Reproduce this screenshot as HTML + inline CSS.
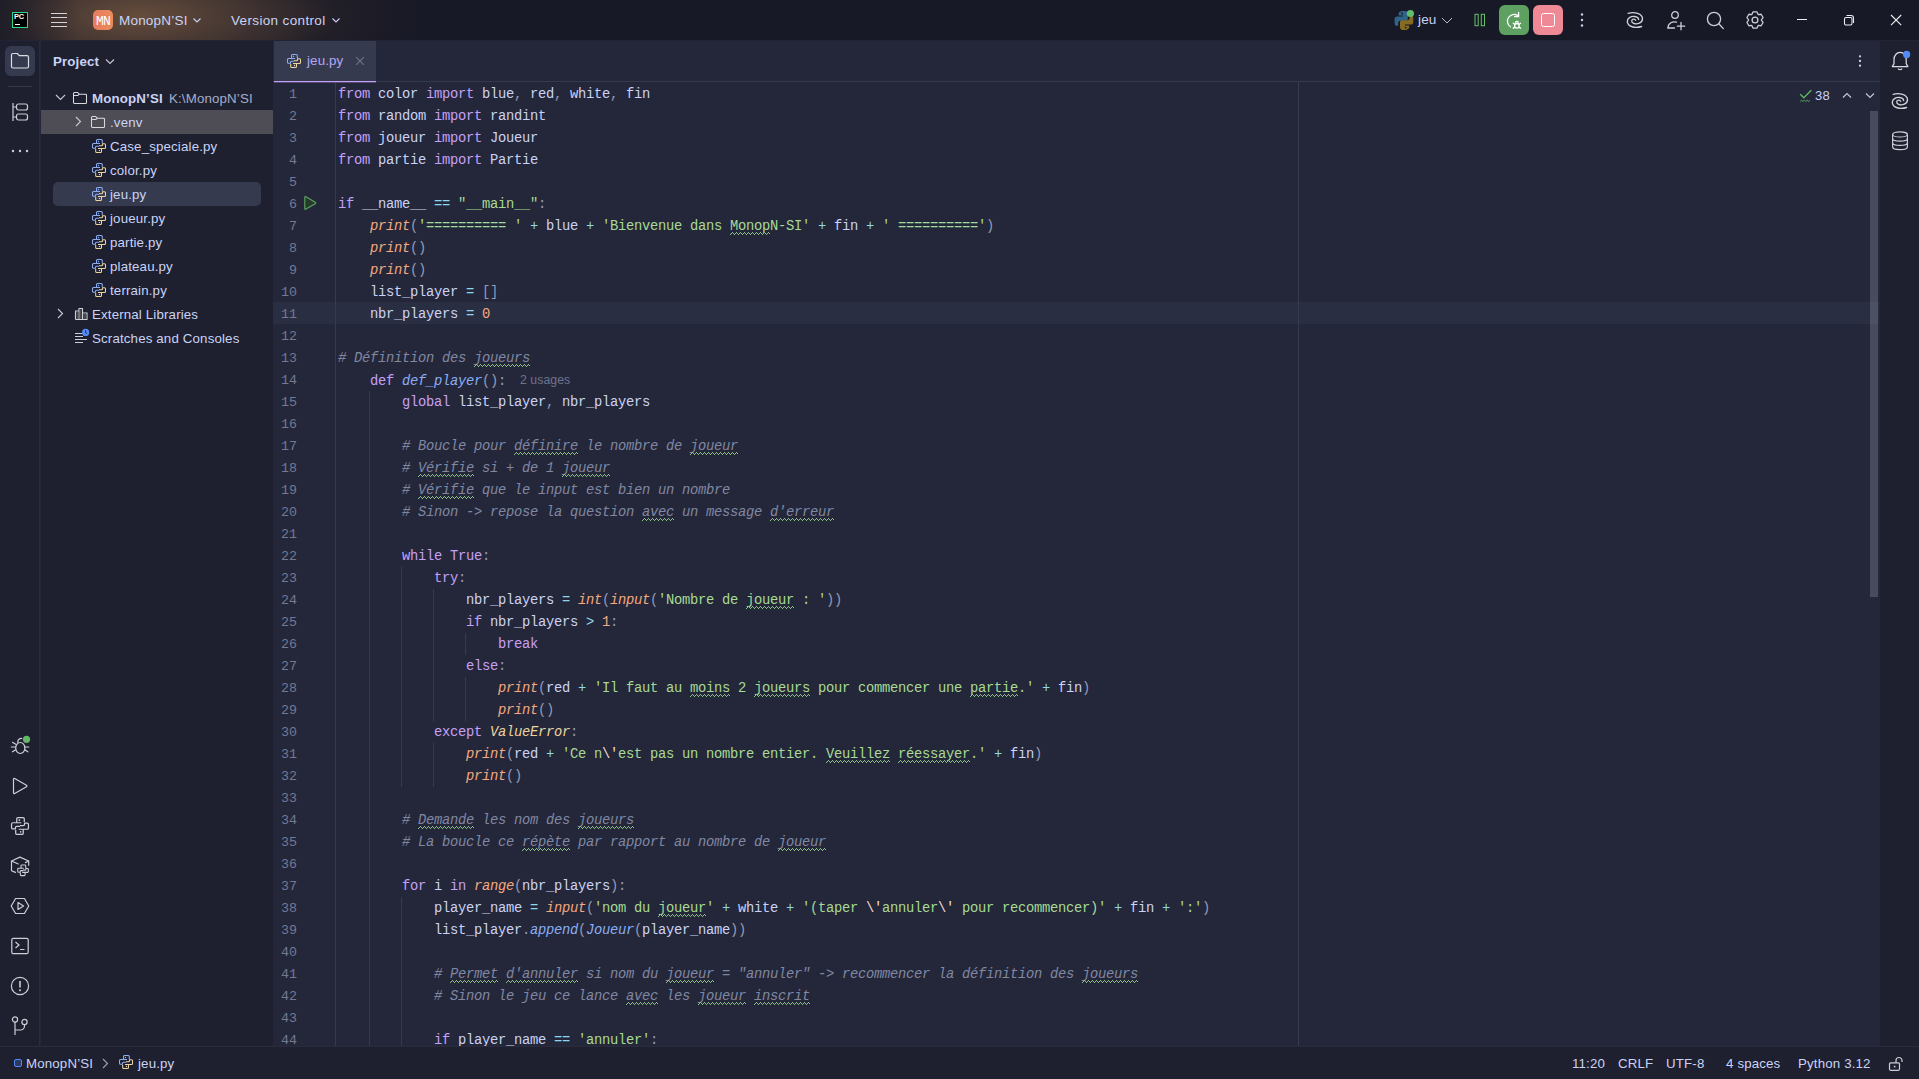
<!DOCTYPE html>
<html><head><meta charset="utf-8">
<style>
*{box-sizing:border-box}
html,body{margin:0;padding:0}
body{width:1919px;height:1079px;overflow:hidden;position:relative;background:#24273a;font-family:"Liberation Sans",sans-serif;font-size:13px;color:#cad3f5}
.abs{position:absolute}
#title{left:0;top:0;width:1919px;height:40px;background:#181926;overflow:hidden}
#glow{left:0;top:0;width:600px;height:40px;background:linear-gradient(90deg, rgba(24,25,38,.75) 0px, rgba(24,25,38,0) 80px), radial-gradient(ellipse 280px 90px at 140px 16px, rgba(110,82,62,.9) 0%, rgba(96,72,57,.62) 35%, rgba(60,46,44,.25) 70%, rgba(24,25,38,0) 100%)}
#tbline{left:0;top:40px;width:1919px;height:1px;background:#222436}
#lstrip{left:0;top:41px;width:40px;height:1005px;background:#1e2030;border-right:1px solid #2a2c3e}
#proj{left:41px;top:41px;width:232px;height:1005px;background:#1e2030}
#editor{left:273px;top:41px;width:1607px;height:1005px;background:#24273a;overflow:hidden}
#rstrip{left:1880px;top:41px;width:39px;height:1005px;background:#1e2030}
#status{left:0;top:1046px;width:1919px;height:33px;background:#1e2030;border-top:1px solid #2a2c3e}
.t{position:absolute;white-space:pre;line-height:16px;letter-spacing:0.15px;font-size:13.3px}
/* code */
#code{position:absolute;left:65px;top:41px;width:1540px;height:1000px}
.ln{position:absolute;left:0;height:22px;line-height:22px;white-space:pre;font-family:"Liberation Mono",monospace;font-size:13.8px;letter-spacing:-0.28px;color:#cad3f5;padding-top:2px}
.kw{color:#c6a0f6}.bi{color:#f5a97f;font-style:italic}.st{color:#a6da95}.es{color:#f4dbd6}.nu{color:#f5a97f}
.cm{color:#8087a2;font-style:italic}.op{color:#91d7e3}.pu{color:#939ab7}.fn{color:#8aadf4;font-style:italic}
.cls{color:#eed49f;font-style:italic}
.id{color:#cad3f5}
.ty{}
.hint{font-family:"Liberation Sans",sans-serif;font-size:12.3px;letter-spacing:0.05px;color:#6e738d;margin-left:14px;font-style:normal;position:relative;top:-1px}
#gutter{position:absolute;left:0;top:41px;width:62px;height:1000px}
.gn{position:absolute;left:0;width:24px;text-align:right;height:22px;line-height:22px;font-family:"Liberation Mono",monospace;font-size:13.333px;color:#737994;padding-top:2px}
#curline{position:absolute;left:0;top:261px;width:1606px;height:22px;background:#2a2e43}
#gsep{position:absolute;left:62px;top:41px;width:1px;height:1000px;background:#363a4f}
#margin{position:absolute;left:1025px;top:41px;width:1px;height:1000px;background:#363a4f}
.ig{position:absolute;width:1px;background:#363a4f}
#tabs{position:absolute;left:0;top:0;width:1607px;height:41px;border-bottom:1px solid #363a4f}
#tab{position:absolute;left:1px;top:0;width:102px;height:40px;background:#363a4f}
#scroll{position:absolute;left:1597px;top:70px;width:8px;height:487px;background:#494d64}
</style></head><body>
<div id="title" class="abs"><div id="glow" class="abs"></div>
  <div class="abs" style="left:12px;top:12px;width:16px;height:16px;background:#000;border:1px solid #2bd98c"></div>
  <div class="abs" style="left:14px;top:13px;font:bold 7.5px 'Liberation Sans',sans-serif;color:#fff;letter-spacing:-0.3px;line-height:8px">PC</div>
  <div class="abs" style="left:15px;top:24px;width:5px;height:1px;background:#fff"></div>
  <svg class="abs" style="left:51px;top:12px" width="16" height="16" viewBox="0 0 16 16"><g stroke="#d4d4dc" stroke-width="1.2" stroke-linecap="round"><line x1="0.5" y1="1.5" x2="15.5" y2="1.5"/><line x1="0.5" y1="5.5" x2="15.5" y2="5.5"/><line x1="0.5" y1="10.5" x2="15.5" y2="10.5"/><line x1="0.5" y1="14.5" x2="15.5" y2="14.5"/></g></svg>
  <div class="abs" style="left:93px;top:10px;width:20px;height:20px;border-radius:5px;background:linear-gradient(90deg,#e77b60,#ea8c5a)"></div>
  <div class="abs" style="left:94px;top:15px;width:18px;text-align:center;font:13px 'Liberation Mono',monospace;color:#fff;line-height:14px;letter-spacing:-0.8px">MN</div>
  <div class="t" style="left:119px;top:13px;font-size:13.5px;letter-spacing:0.2px;color:#cad3f5">MonopN’SI</div>
  <svg class="abs" style="left:192px;top:16px" width="10" height="8" viewBox="0 0 10 8"><path d="M1.5 2.5 L5 6 L8.5 2.5" fill="none" stroke="#cad3f5" stroke-width="1.1"/></svg>
  <div class="t" style="left:231px;top:13px;font-size:13.5px;letter-spacing:0.35px;color:#cad3f5">Version control</div>
  <svg class="abs" style="left:331px;top:16px" width="10" height="8" viewBox="0 0 10 8"><path d="M1.5 2.5 L5 6 L8.5 2.5" fill="none" stroke="#cad3f5" stroke-width="1.1"/></svg>
  <svg class="abs" style="left:1393px;top:8px" width="26" height="24" viewBox="0 0 26 24">
  <g transform="translate(1.2,1.5) scale(1.0)">
  <path d="M6.8 1.6 h4.4 a2.4 2.4 0 0 1 2.4 2.4 v5.6 a1.6 1.6 0 0 1 -1.6 1.6 h-5.6 a2.4 2.4 0 0 0 -2.4 2.4 v2.6 h-1.8 a1.8 1.8 0 0 1 -1.8 -1.8 v-4.8 a2.6 2.6 0 0 1 2.6 -2.6 h5.8 v-1 h-4.4 v-1.6 a2.4 2.4 0 0 1 2.4 -2.4 z" fill="#2f6488"/>
  <path d="M12.6 20.4 h-4.4 a2.4 2.4 0 0 1 -2.4 -2.4 v-5.6 a1.6 1.6 0 0 1 1.6 -1.6 h5.6 a2.4 2.4 0 0 0 2.4 -2.4 v-2.6 h1.8 a1.8 1.8 0 0 1 1.8 1.8 v4.8 a2.6 2.6 0 0 1 -2.6 2.6 h-5.8 v1 h4.4 v1.6 a2.4 2.4 0 0 1 -2.4 2.4 z" fill="#866b22"/>
  <circle cx="7.9" cy="3.9" r="0.85" fill="#181926"/><circle cx="11.5" cy="18.1" r="0.85" fill="#181926"/>
  </g>
  <circle cx="17.4" cy="5.5" r="3.6" fill="#62bd6a"/>
</svg>
<div class="t" style="left:1418px;top:12px;font-size:13.5px;color:#cad3f5">jeu</div>
<svg class="abs" style="left:1441px;top:16px" width="12" height="9" viewBox="0 0 12 9"><path d="M1 2 L6 7 L11 2" fill="none" stroke="#b9bac4" stroke-width="1"/></svg>
<svg class="abs" style="left:1474px;top:13px" width="12" height="14" viewBox="0 0 12 14"><g fill="none" stroke="#65c16a" stroke-width="1"><rect x="1" y="1.3" width="3.2" height="11.4"/><rect x="7.3" y="1.3" width="3.2" height="11.4"/></g></svg>
<div class="abs" style="left:1499px;top:5px;width:30px;height:30px;border-radius:6px;background:#5ea061"></div>
<svg class="abs" style="left:1499px;top:5px" width="30" height="30" viewBox="0 0 30 30"><g fill="none" stroke="#fff" stroke-width="1.3" stroke-linecap="round">
  <path d="M11.5 21.8 A6.3 6.3 0 0 1 18.8 10.5"/><path d="M19.6 7.5 v4 h-4"/>
  <circle cx="17.9" cy="20.8" r="2.3"/><path d="M14.2 18.3 l1.6 1 M21.6 18.3 l-1.6 1 M14.2 23.2 l1.6 -0.8 M21.6 23.2 l-1.6 -0.8"/><path d="M16.6 17.3 a1.4 1.4 0 0 1 2.6 0"/></g></svg>
<div class="abs" style="left:1533px;top:5px;width:30px;height:30px;border-radius:6px;background:#ee8995"></div>
<div class="abs" style="left:1541px;top:13px;width:14px;height:14px;border-radius:2.5px;border:1.4px solid #fff"></div>
<svg class="abs" style="left:1578px;top:11px" width="8" height="18" viewBox="0 0 8 18"><g fill="#c9cff0"><circle cx="4" cy="3.5" r="1.2"/><circle cx="4" cy="9" r="1.2"/><circle cx="4" cy="14.5" r="1.2"/></g></svg>
<svg class="abs" style="left:1622px;top:8px" width="26" height="24" viewBox="0 0 26 24"><g fill="none" stroke="#d0d1d9" stroke-width="1.35" stroke-linecap="round">
  <path d="M6.2 5.3 C12 3.6 20.5 5.3 20.5 10.8 C20.5 15.2 15 16.6 11.6 15.3 C9 14.3 9.2 11.4 11.5 11.1 C12.6 11 13.4 11.7 13.7 12.3"/>
  <path d="M19.6 18.5 C13.5 20.4 5.3 19 5.3 13.3 C5.3 9.4 9.6 8.2 12.4 8.5 C15 8.8 16.6 10.1 16.6 11.6"/></g></svg>
<svg class="abs" style="left:1666px;top:10px" width="20" height="21" viewBox="0 0 20 21"><g fill="none" stroke="#cdced6" stroke-width="1.3" stroke-linecap="round">
  <circle cx="9" cy="5" r="3.3"/><path d="M2 18 C2 13.5 6 11.2 10.5 12.2"/><path d="M2 18 H8.5"/><path d="M15 12.5 V19.8 M11.3 16.2 H18.7"/></g></svg>
<svg class="abs" style="left:1705px;top:11px" width="20" height="20" viewBox="0 0 20 20"><g fill="none" stroke="#cdced6" stroke-width="1.35" stroke-linecap="round"><circle cx="9" cy="8" r="6.6"/><path d="M13.8 12.8 L18.3 17.6"/></g></svg>
<svg class="abs" style="left:1745px;top:10px" width="20" height="20" viewBox="0 0 20 20"><g fill="none" stroke="#cdced6" stroke-width="1.3" stroke-linejoin="round"><path d="M8.11 1.82 L11.89 1.82 L13.15 4.54 L16.14 4.27 L18.03 7.54 L16.30 10.00 L18.03 12.46 L16.14 15.73 L13.15 15.46 L11.89 18.18 L8.11 18.18 L6.85 15.46 L3.86 15.73 L1.97 12.46 L3.70 10.00 L1.97 7.54 L3.86 4.27 L6.85 4.54 Z"/><circle cx="10" cy="10" r="2.9"/></g></svg>
<svg class="abs" style="left:1795px;top:14px" width="14" height="12" viewBox="0 0 14 12"><path d="M2 5.5 H12" stroke="#eeeef3" stroke-width="1.05"/></svg>
<svg class="abs" style="left:1842px;top:13px" width="14" height="14" viewBox="0 0 14 14"><g fill="none" stroke="#eeeef3" stroke-width="1.05"><rect x="2.5" y="4.5" width="7.5" height="7.5" rx="1.5"/><path d="M4.5 2.5 H9 a2.5 2.5 0 0 1 2.5 2.5 V10"/></g></svg>
<svg class="abs" style="left:1889px;top:13px" width="14" height="14" viewBox="0 0 14 14"><path d="M2 2 L12.2 12.2 M12.2 2 L2 12.2" stroke="#eeeef3" stroke-width="1.1"/></svg>

</div>
<div id="tbline" class="abs"></div>
<div id="lstrip" class="abs"></div>
<div id="proj" class="abs"></div>
<!-- left strip -->
<div class="abs" style="left:5px;top:46px;width:30px;height:30px;border-radius:6px;background:#363a4f"></div>
<svg class="abs" style="left:10px;top:52px" width="20" height="18" viewBox="0 0 20 18"><path d="M1.5 3 a1.5 1.5 0 0 1 1.5 -1.5 h4.3 l2 2.2 h7.7 a1.5 1.5 0 0 1 1.5 1.5 v9.3 a1.5 1.5 0 0 1 -1.5 1.5 h-14 a1.5 1.5 0 0 1 -1.5 -1.5 z" fill="none" stroke="#dcdde4" stroke-width="1.2" stroke-linejoin="round"/></svg>
<div class="abs" style="left:8px;top:86px;width:24px;height:1px;background:#363a4f"></div>
<svg class="abs" style="left:11px;top:102px" width="18" height="20" viewBox="0 0 18 20"><g fill="none" stroke="#cdced6" stroke-width="1.2"><path d="M2 1 V19 M2 5 H5 M2 15 H5"/><rect x="5.5" y="2" width="11" height="6" rx="2"/><rect x="5.5" y="12" width="11" height="6" rx="2"/></g></svg>
<svg class="abs" style="left:10px;top:146px" width="20" height="10" viewBox="0 0 20 10"><g fill="#cdced6"><circle cx="3" cy="5" r="1.2"/><circle cx="10" cy="5" r="1.2"/><circle cx="17" cy="5" r="1.2"/></g></svg>
<!-- bottom strip icons -->
<svg class="abs" style="left:6px;top:732px" width="28" height="28" viewBox="0 0 28 28"><g fill="none" stroke="#d0d1d9" stroke-width="1.2" stroke-linecap="round"><ellipse cx="14.3" cy="16" rx="4.6" ry="5.5"/><path d="M11.8 10.4 C11.6 7.4 13.8 6.3 15.8 6.5"/><path d="M6.5 10.3 L9.7 12.2 M5.3 15 H9.6 M6.5 19.8 L9.8 17.8 M22.8 15 H19 M21.8 19.8 L18.8 17.8"/></g><circle cx="20.5" cy="7.3" r="3.6" fill="#62b865"/></svg>
<svg class="abs" style="left:11px;top:777px" width="18" height="18" viewBox="0 0 18 18"><path d="M2.5 2.2 V15.8 a0.8 0.8 0 0 0 1.2 0.7 L15.5 9.7 a0.8 0.8 0 0 0 0 -1.4 L3.7 1.5 a0.8 0.8 0 0 0 -1.2 0.7 z" fill="none" stroke="#cdced6" stroke-width="1.2" stroke-linejoin="round"/></svg>
<svg class="abs" style="left:7px;top:813px" width="26" height="26" viewBox="0 0 20 20"><g fill="none" stroke="#cdced6" stroke-width="0.95"><path d="M11 7.5 H4.5 a1 1 0 0 0 -1 1 V11.3 a1 1 0 0 0 1 1 H6.5 V11.3 a1 1 0 0 1 1 -1 H10 M7.5 7.5 V4.5 a1 1 0 0 1 1 -1 H12.3 a1 1 0 0 1 1 1 V7"/><path d="M9 12.5 H15.5 a1 1 0 0 0 1 -1 V8.7 a1 1 0 0 0 -1 -1 H13.5 V8.7 a1 1 0 0 1 -1 1 H10 M12.5 12.5 V15.5 a1 1 0 0 1 -1 1 H7.7 a1 1 0 0 1 -1 -1 V13"/></g><circle cx="9.5" cy="5.5" r="0.65" fill="#cdced6"/><circle cx="10.5" cy="14.5" r="0.65" fill="#cdced6"/></svg>
<svg class="abs" style="left:6px;top:850px" width="28" height="28" viewBox="0 0 28 28"><g fill="none" stroke="#cdced6" stroke-width="1.2" stroke-linejoin="round" stroke-linecap="round"><path d="M9.4 22.4 L5.5 20.7 V11 L13.9 7.1 L22.7 11 V15.2 M5.5 11 L12.3 14 M22.7 11 L19.4 12.6"/></g>
<g transform="translate(8.9,12.2) scale(0.814)"><g fill="none" stroke="#cdced6" stroke-width="1.35"><path d="M11 7.5 H4.5 a1 1 0 0 0 -1 1 V11.3 a1 1 0 0 0 1 1 H6.5 V11.3 a1 1 0 0 1 1 -1 H10 M7.5 7.5 V4.5 a1 1 0 0 1 1 -1 H12.3 a1 1 0 0 1 1 1 V7"/><path d="M9 12.5 H15.5 a1 1 0 0 0 1 -1 V8.7 a1 1 0 0 0 -1 -1 H13.5 V8.7 a1 1 0 0 1 -1 1 H10 M12.5 12.5 V15.5 a1 1 0 0 1 -1 1 H7.7 a1 1 0 0 1 -1 -1 V13"/></g></g></svg>
<svg class="abs" style="left:10px;top:897px" width="20" height="18" viewBox="0 0 20 18"><g fill="none" stroke="#cdced6" stroke-width="1.2" stroke-linejoin="round"><path d="M5.6 1.5 H14.4 L18.8 9 L14.4 16.5 H5.6 L1.2 9 Z"/><path d="M8 5.5 V12.5 L13.6 9 Z"/></g></svg>
<svg class="abs" style="left:11px;top:937px" width="18" height="18" viewBox="0 0 18 18"><g fill="none" stroke="#cdced6" stroke-width="1.2"><rect x="0.8" y="1.3" width="16.4" height="15.4" rx="1.5"/><path d="M4.5 5 L8 8 L4.5 11 M9 12.5 H13.5"/></g></svg>
<svg class="abs" style="left:10px;top:976px" width="20" height="20" viewBox="0 0 20 20"><g fill="none" stroke="#cdced6" stroke-width="1.2"><circle cx="10" cy="10" r="8.6"/><path d="M10 5 V11.5" stroke-width="1.6"/></g><circle cx="10" cy="14.3" r="1" fill="#cdced6"/></svg>
<svg class="abs" style="left:11px;top:1016px" width="18" height="20" viewBox="0 0 18 20"><g fill="none" stroke="#cdced6" stroke-width="1.2"><circle cx="4" cy="3.5" r="2.6"/><circle cx="13.5" cy="6" r="2.6"/><path d="M4 6.1 V19 M4 14 H9.5 a4 4 0 0 0 4 -4 V8.6"/></g></svg>

<!-- project panel -->
<div class="t" style="left:53px;top:54px;font-weight:bold;font-size:13.3px;color:#cad3f5">Project</div>
<svg class="abs" style="left:104px;top:57px" width="12" height="9" viewBox="0 0 12 9"><path d="M2 2.5 L6 6.5 L10 2.5" fill="none" stroke="#c8c9d2" stroke-width="1.1"/></svg>
<div class="abs" style="left:41px;top:110px;width:232px;height:24px;background:#4e4c54"></div>
<div class="abs" style="left:53px;top:182px;width:208px;height:24px;border-radius:5px;background:#363a4f"></div>
<svg class="abs" style="left:55px;top:94px" width="11" height="7" viewBox="0 0 11 7"><path d="M1 1 L5.5 5.5 L10 1" fill="none" stroke="#c8c9d2" stroke-width="1.1"/></svg>
<svg class="abs" style="left:72px;top:91px" width="16" height="14" viewBox="0 0 16 14"><path d="M1.5 2.5 a1 1 0 0 1 1 -1 h3.2 l1.6 1.7 h6.2 a1 1 0 0 1 1 1 v7.3 a1 1 0 0 1 -1 1 h-11 a1 1 0 0 1 -1 -1 z M1.5 4.5 H5.8 L7.3 3.2" fill="none" stroke="#d8d9e0" stroke-width="1.05" stroke-linejoin="round"/></svg>
<div class="t" style="left:92px;top:91px;font-weight:bold;color:#cad3f5">MonopN’SI</div>
<div class="t" style="left:169px;top:91px;color:#a5adcb">K:\MonopN’SI</div>
<svg class="abs" style="left:75px;top:116px" width="7" height="11" viewBox="0 0 7 11"><path d="M1 1 L5.5 5.5 L1 10" fill="none" stroke="#c8c9d2" stroke-width="1.1"/></svg>
<svg class="abs" style="left:90px;top:115px" width="16" height="14" viewBox="0 0 16 14"><path d="M1.5 2.5 a1 1 0 0 1 1 -1 h3.2 l1.6 1.7 h6.2 a1 1 0 0 1 1 1 v7.3 a1 1 0 0 1 -1 1 h-11 a1 1 0 0 1 -1 -1 z M1.5 4.5 H5.8 L7.3 3.2" fill="none" stroke="#d8d9e0" stroke-width="1.05" stroke-linejoin="round"/></svg>
<div class="t" style="left:110px;top:115px;color:#cad3f5">.venv</div>
<svg class="abs" style="left:89px;top:136px" width="20" height="20" viewBox="0 0 20 20"><g fill="none" stroke-width="1.05"><path stroke="#8aadf4" d="M11 7.5 H4.5 a1 1 0 0 0 -1 1 V11.3 a1 1 0 0 0 1 1 H6.5 V11.3 a1 1 0 0 1 1 -1 H10 M7.5 7.5 V4.5 a1 1 0 0 1 1 -1 H12.3 a1 1 0 0 1 1 1 V7"/><path stroke="#eed49f" d="M9 12.5 H15.5 a1 1 0 0 0 1 -1 V8.7 a1 1 0 0 0 -1 -1 H13.5 V8.7 a1 1 0 0 1 -1 1 H10 M12.5 12.5 V15.5 a1 1 0 0 1 -1 1 H7.7 a1 1 0 0 1 -1 -1 V13"/></g><circle cx="9.5" cy="5.5" r="0.7" fill="#8aadf4"/><circle cx="10.5" cy="14.5" r="0.7" fill="#eed49f"/></svg>
<div class="t" style="left:110px;top:139px;color:#cad3f5">Case_speciale.py</div>
<svg class="abs" style="left:89px;top:160px" width="20" height="20" viewBox="0 0 20 20"><g fill="none" stroke-width="1.05"><path stroke="#8aadf4" d="M11 7.5 H4.5 a1 1 0 0 0 -1 1 V11.3 a1 1 0 0 0 1 1 H6.5 V11.3 a1 1 0 0 1 1 -1 H10 M7.5 7.5 V4.5 a1 1 0 0 1 1 -1 H12.3 a1 1 0 0 1 1 1 V7"/><path stroke="#eed49f" d="M9 12.5 H15.5 a1 1 0 0 0 1 -1 V8.7 a1 1 0 0 0 -1 -1 H13.5 V8.7 a1 1 0 0 1 -1 1 H10 M12.5 12.5 V15.5 a1 1 0 0 1 -1 1 H7.7 a1 1 0 0 1 -1 -1 V13"/></g><circle cx="9.5" cy="5.5" r="0.7" fill="#8aadf4"/><circle cx="10.5" cy="14.5" r="0.7" fill="#eed49f"/></svg>
<div class="t" style="left:110px;top:163px;color:#cad3f5">color.py</div>
<svg class="abs" style="left:89px;top:184px" width="20" height="20" viewBox="0 0 20 20"><g fill="none" stroke-width="1.05"><path stroke="#8aadf4" d="M11 7.5 H4.5 a1 1 0 0 0 -1 1 V11.3 a1 1 0 0 0 1 1 H6.5 V11.3 a1 1 0 0 1 1 -1 H10 M7.5 7.5 V4.5 a1 1 0 0 1 1 -1 H12.3 a1 1 0 0 1 1 1 V7"/><path stroke="#eed49f" d="M9 12.5 H15.5 a1 1 0 0 0 1 -1 V8.7 a1 1 0 0 0 -1 -1 H13.5 V8.7 a1 1 0 0 1 -1 1 H10 M12.5 12.5 V15.5 a1 1 0 0 1 -1 1 H7.7 a1 1 0 0 1 -1 -1 V13"/></g><circle cx="9.5" cy="5.5" r="0.7" fill="#8aadf4"/><circle cx="10.5" cy="14.5" r="0.7" fill="#eed49f"/></svg>
<div class="t" style="left:110px;top:187px;color:#cad3f5">jeu.py</div>
<svg class="abs" style="left:89px;top:208px" width="20" height="20" viewBox="0 0 20 20"><g fill="none" stroke-width="1.05"><path stroke="#8aadf4" d="M11 7.5 H4.5 a1 1 0 0 0 -1 1 V11.3 a1 1 0 0 0 1 1 H6.5 V11.3 a1 1 0 0 1 1 -1 H10 M7.5 7.5 V4.5 a1 1 0 0 1 1 -1 H12.3 a1 1 0 0 1 1 1 V7"/><path stroke="#eed49f" d="M9 12.5 H15.5 a1 1 0 0 0 1 -1 V8.7 a1 1 0 0 0 -1 -1 H13.5 V8.7 a1 1 0 0 1 -1 1 H10 M12.5 12.5 V15.5 a1 1 0 0 1 -1 1 H7.7 a1 1 0 0 1 -1 -1 V13"/></g><circle cx="9.5" cy="5.5" r="0.7" fill="#8aadf4"/><circle cx="10.5" cy="14.5" r="0.7" fill="#eed49f"/></svg>
<div class="t" style="left:110px;top:211px;color:#cad3f5">joueur.py</div>
<svg class="abs" style="left:89px;top:232px" width="20" height="20" viewBox="0 0 20 20"><g fill="none" stroke-width="1.05"><path stroke="#8aadf4" d="M11 7.5 H4.5 a1 1 0 0 0 -1 1 V11.3 a1 1 0 0 0 1 1 H6.5 V11.3 a1 1 0 0 1 1 -1 H10 M7.5 7.5 V4.5 a1 1 0 0 1 1 -1 H12.3 a1 1 0 0 1 1 1 V7"/><path stroke="#eed49f" d="M9 12.5 H15.5 a1 1 0 0 0 1 -1 V8.7 a1 1 0 0 0 -1 -1 H13.5 V8.7 a1 1 0 0 1 -1 1 H10 M12.5 12.5 V15.5 a1 1 0 0 1 -1 1 H7.7 a1 1 0 0 1 -1 -1 V13"/></g><circle cx="9.5" cy="5.5" r="0.7" fill="#8aadf4"/><circle cx="10.5" cy="14.5" r="0.7" fill="#eed49f"/></svg>
<div class="t" style="left:110px;top:235px;color:#cad3f5">partie.py</div>
<svg class="abs" style="left:89px;top:256px" width="20" height="20" viewBox="0 0 20 20"><g fill="none" stroke-width="1.05"><path stroke="#8aadf4" d="M11 7.5 H4.5 a1 1 0 0 0 -1 1 V11.3 a1 1 0 0 0 1 1 H6.5 V11.3 a1 1 0 0 1 1 -1 H10 M7.5 7.5 V4.5 a1 1 0 0 1 1 -1 H12.3 a1 1 0 0 1 1 1 V7"/><path stroke="#eed49f" d="M9 12.5 H15.5 a1 1 0 0 0 1 -1 V8.7 a1 1 0 0 0 -1 -1 H13.5 V8.7 a1 1 0 0 1 -1 1 H10 M12.5 12.5 V15.5 a1 1 0 0 1 -1 1 H7.7 a1 1 0 0 1 -1 -1 V13"/></g><circle cx="9.5" cy="5.5" r="0.7" fill="#8aadf4"/><circle cx="10.5" cy="14.5" r="0.7" fill="#eed49f"/></svg>
<div class="t" style="left:110px;top:259px;color:#cad3f5">plateau.py</div>
<svg class="abs" style="left:89px;top:280px" width="20" height="20" viewBox="0 0 20 20"><g fill="none" stroke-width="1.05"><path stroke="#8aadf4" d="M11 7.5 H4.5 a1 1 0 0 0 -1 1 V11.3 a1 1 0 0 0 1 1 H6.5 V11.3 a1 1 0 0 1 1 -1 H10 M7.5 7.5 V4.5 a1 1 0 0 1 1 -1 H12.3 a1 1 0 0 1 1 1 V7"/><path stroke="#eed49f" d="M9 12.5 H15.5 a1 1 0 0 0 1 -1 V8.7 a1 1 0 0 0 -1 -1 H13.5 V8.7 a1 1 0 0 1 -1 1 H10 M12.5 12.5 V15.5 a1 1 0 0 1 -1 1 H7.7 a1 1 0 0 1 -1 -1 V13"/></g><circle cx="9.5" cy="5.5" r="0.7" fill="#8aadf4"/><circle cx="10.5" cy="14.5" r="0.7" fill="#eed49f"/></svg>
<div class="t" style="left:110px;top:283px;color:#cad3f5">terrain.py</div>
<svg class="abs" style="left:57px;top:308px" width="7" height="11" viewBox="0 0 7 11"><path d="M1 1 L5.5 5.5 L1 10" fill="none" stroke="#c8c9d2" stroke-width="1.1"/></svg>
<svg class="abs" style="left:74px;top:307px" width="15" height="14" viewBox="0 0 15 14"><g fill="none" stroke="#cdced6" stroke-width="1.1"><path d="M1.5 12.5 V4 H5 V12.5 M5 12.5 V1.5 H8.5 V12.5 M8.5 12.5 V6 H13 V12.5 H1.5"/></g><g fill="#4a4a52"><rect x="2.3" y="4.8" width="2" height="7"/><rect x="5.8" y="2.3" width="2" height="9.5"/><rect x="9.3" y="6.8" width="3" height="5"/></g></svg>
<div class="t" style="left:92px;top:307px;color:#cad3f5">External Libraries</div>
<svg class="abs" style="left:74px;top:327px" width="16" height="17" viewBox="0 0 16 17"><g stroke="#cdced6" stroke-width="1.1"><path d="M1 6.5 H8 M1 9.5 H9 M1 12.5 H13 M1 15.5 H9"/></g><circle cx="11.6" cy="5.4" r="3.6" fill="#548af7"/><path d="M11.6 3.4 V5.6 L13 6.6" stroke="#1e2030" stroke-width="0.9" fill="none"/></svg>
<div class="t" style="left:92px;top:331px;color:#cad3f5">Scratches and Consoles</div>

<div id="editor" class="abs">
  <div id="tabs"></div>
  <div id="tab"></div>
  <div id="curline"></div>
  <div id="gsep"></div>
  <div id="margin"></div>
  <div class="ig" style="left:96px;top:350px;height:660px"></div>
<div class="ig" style="left:128px;top:526px;height:220px"></div>
<div class="ig" style="left:160px;top:548px;height:132px"></div>
<div class="ig" style="left:192px;top:592px;height:22px"></div>
<div class="ig" style="left:192px;top:636px;height:44px"></div>
<div class="ig" style="left:160px;top:702px;height:44px"></div>
<div class="ig" style="left:128px;top:856px;height:154px"></div>
  <div id="gutter"><div class="gn" style="top:0px">1</div>
<div class="gn" style="top:22px">2</div>
<div class="gn" style="top:44px">3</div>
<div class="gn" style="top:66px">4</div>
<div class="gn" style="top:88px">5</div>
<div class="gn" style="top:110px">6</div>
<div class="gn" style="top:132px">7</div>
<div class="gn" style="top:154px">8</div>
<div class="gn" style="top:176px">9</div>
<div class="gn" style="top:198px">10</div>
<div class="gn cur" style="top:220px">11</div>
<div class="gn" style="top:242px">12</div>
<div class="gn" style="top:264px">13</div>
<div class="gn" style="top:286px">14</div>
<div class="gn" style="top:308px">15</div>
<div class="gn" style="top:330px">16</div>
<div class="gn" style="top:352px">17</div>
<div class="gn" style="top:374px">18</div>
<div class="gn" style="top:396px">19</div>
<div class="gn" style="top:418px">20</div>
<div class="gn" style="top:440px">21</div>
<div class="gn" style="top:462px">22</div>
<div class="gn" style="top:484px">23</div>
<div class="gn" style="top:506px">24</div>
<div class="gn" style="top:528px">25</div>
<div class="gn" style="top:550px">26</div>
<div class="gn" style="top:572px">27</div>
<div class="gn" style="top:594px">28</div>
<div class="gn" style="top:616px">29</div>
<div class="gn" style="top:638px">30</div>
<div class="gn" style="top:660px">31</div>
<div class="gn" style="top:682px">32</div>
<div class="gn" style="top:704px">33</div>
<div class="gn" style="top:726px">34</div>
<div class="gn" style="top:748px">35</div>
<div class="gn" style="top:770px">36</div>
<div class="gn" style="top:792px">37</div>
<div class="gn" style="top:814px">38</div>
<div class="gn" style="top:836px">39</div>
<div class="gn" style="top:858px">40</div>
<div class="gn" style="top:880px">41</div>
<div class="gn" style="top:902px">42</div>
<div class="gn" style="top:924px">43</div>
<div class="gn" style="top:946px">44</div></div>
  <div id="code"><div class="ln" style="top:0px"><span class="kw">from</span> <span class="id">color</span> <span class="kw">import</span> <span class="id">blue</span><span class="pu">,</span> <span class="id">red</span><span class="pu">,</span> <span class="id">white</span><span class="pu">,</span> <span class="id">fin</span></div>
<div class="ln" style="top:22px"><span class="kw">from</span> <span class="id">random</span> <span class="kw">import</span> <span class="id">randint</span></div>
<div class="ln" style="top:44px"><span class="kw">from</span> <span class="id">joueur</span> <span class="kw">import</span> <span class="id">Joueur</span></div>
<div class="ln" style="top:66px"><span class="kw">from</span> <span class="id">partie</span> <span class="kw">import</span> <span class="id">Partie</span></div>
<div class="ln" style="top:88px"></div>
<div class="ln" style="top:110px"><span class="kw">if</span> <span class="id">__name__</span> <span class="op">==</span> <span class="st">"__main__"</span><span class="pu">:</span></div>
<div class="ln" style="top:132px">    <span class="bi">print</span><span class="pu">(</span><span class="st">'========== '</span> <span class="op">+</span> <span class="id">blue</span> <span class="op">+</span> <span class="st">'Bienvenue dans <span class="ty">Monop</span>N-SI'</span> <span class="op">+</span> <span class="id">fin</span> <span class="op">+</span> <span class="st">' =========='</span><span class="pu">)</span></div>
<div class="ln" style="top:154px">    <span class="bi">print</span><span class="pu">(</span><span class="pu">)</span></div>
<div class="ln" style="top:176px">    <span class="bi">print</span><span class="pu">(</span><span class="pu">)</span></div>
<div class="ln" style="top:198px">    <span class="id">list_player</span> <span class="op">=</span> <span class="pu">[</span><span class="pu">]</span></div>
<div class="ln" style="top:220px">    <span class="id">nbr_players</span> <span class="op">=</span> <span class="nu">0</span></div>
<div class="ln" style="top:242px"></div>
<div class="ln" style="top:264px"><span class="cm"># Définition des <span class="ty">joueurs</span></span></div>
<div class="ln" style="top:286px">    <span class="kw">def</span> <span class="fn">def_player</span><span class="pu">(</span><span class="pu">)</span><span class="pu">:</span><span class="hint">2 usages</span></div>
<div class="ln" style="top:308px">        <span class="kw">global</span> <span class="id">list_player</span><span class="pu">,</span> <span class="id">nbr_players</span></div>
<div class="ln" style="top:330px"></div>
<div class="ln" style="top:352px">        <span class="cm"># Boucle pour <span class="ty">définire</span> le nombre de <span class="ty">joueur</span></span></div>
<div class="ln" style="top:374px">        <span class="cm"># <span class="ty">Vérifie</span> si + de 1 <span class="ty">joueur</span></span></div>
<div class="ln" style="top:396px">        <span class="cm"># <span class="ty">Vérifie</span> que le input est bien un nombre</span></div>
<div class="ln" style="top:418px">        <span class="cm"># Sinon -&gt; repose la question <span class="ty">avec</span> un message <span class="ty">d'erreur</span></span></div>
<div class="ln" style="top:440px"></div>
<div class="ln" style="top:462px">        <span class="kw">while</span> <span class="kw">True</span><span class="pu">:</span></div>
<div class="ln" style="top:484px">            <span class="kw">try</span><span class="pu">:</span></div>
<div class="ln" style="top:506px">                <span class="id">nbr_players</span> <span class="op">=</span> <span class="bi">int</span><span class="pu">(</span><span class="bi">input</span><span class="pu">(</span><span class="st">'Nombre de <span class="ty">joueur</span> : '</span><span class="pu">)</span><span class="pu">)</span></div>
<div class="ln" style="top:528px">                <span class="kw">if</span> <span class="id">nbr_players</span> <span class="op">&gt;</span> <span class="nu">1</span><span class="pu">:</span></div>
<div class="ln" style="top:550px">                    <span class="kw">break</span></div>
<div class="ln" style="top:572px">                <span class="kw">else</span><span class="pu">:</span></div>
<div class="ln" style="top:594px">                    <span class="bi">print</span><span class="pu">(</span><span class="id">red</span> <span class="op">+</span> <span class="st">'Il faut au <span class="ty">moins</span> 2 <span class="ty">joueurs</span> pour commencer une <span class="ty">partie</span>.'</span> <span class="op">+</span> <span class="id">fin</span><span class="pu">)</span></div>
<div class="ln" style="top:616px">                    <span class="bi">print</span><span class="pu">(</span><span class="pu">)</span></div>
<div class="ln" style="top:638px">            <span class="kw">except</span> <span class="cls">ValueError</span><span class="pu">:</span></div>
<div class="ln" style="top:660px">                <span class="bi">print</span><span class="pu">(</span><span class="id">red</span> <span class="op">+</span> <span class="st">'Ce n<span class="es">\'</span>est pas un nombre entier. <span class="ty">Veuillez</span> <span class="ty">réessayer</span>.'</span> <span class="op">+</span> <span class="id">fin</span><span class="pu">)</span></div>
<div class="ln" style="top:682px">                <span class="bi">print</span><span class="pu">(</span><span class="pu">)</span></div>
<div class="ln" style="top:704px"></div>
<div class="ln" style="top:726px">        <span class="cm"># <span class="ty">Demande</span> les nom des <span class="ty">joueurs</span></span></div>
<div class="ln" style="top:748px">        <span class="cm"># La boucle ce <span class="ty">répète</span> par rapport au nombre de <span class="ty">joueur</span></span></div>
<div class="ln" style="top:770px"></div>
<div class="ln" style="top:792px">        <span class="kw">for</span> <span class="id">i</span> <span class="kw">in</span> <span class="bi">range</span><span class="pu">(</span><span class="id">nbr_players</span><span class="pu">)</span><span class="pu">:</span></div>
<div class="ln" style="top:814px">            <span class="id">player_name</span> <span class="op">=</span> <span class="bi">input</span><span class="pu">(</span><span class="st">'nom du <span class="ty">joueur</span>'</span> <span class="op">+</span> <span class="id">white</span> <span class="op">+</span> <span class="st">'(taper <span class="es">\'</span>annuler<span class="es">\'</span> pour recommencer)'</span> <span class="op">+</span> <span class="id">fin</span> <span class="op">+</span> <span class="st">':'</span><span class="pu">)</span></div>
<div class="ln" style="top:836px">            <span class="id">list_player</span><span class="pu">.</span><span class="fn">append</span><span class="pu">(</span><span class="fn">Joueur</span><span class="pu">(</span><span class="id">player_name</span><span class="pu">)</span><span class="pu">)</span></div>
<div class="ln" style="top:858px"></div>
<div class="ln" style="top:880px">            <span class="cm"># <span class="ty">Permet</span> <span class="ty">d'annuler</span> si nom du <span class="ty">joueur</span> = "annuler" -&gt; recommencer la définition des <span class="ty">joueurs</span></span></div>
<div class="ln" style="top:902px">            <span class="cm"># Sinon le jeu ce lance <span class="ty">avec</span> les <span class="ty">joueur</span> <span class="ty">inscrit</span></span></div>
<div class="ln" style="top:924px"></div>
<div class="ln" style="top:946px">            <span class="kw">if</span> <span class="id">player_name</span> <span class="op">==</span> <span class="st">'annuler'</span><span class="pu">:</span></div></div>
  
</div>
<div id="rstrip" class="abs"></div>
<div id="status" class="abs"></div>
<!-- tab contents (page coords) -->
<div class="abs" style="left:274px;top:81px;width:102px;height:1px;background:#c6a0f6"></div>
<div class="abs" style="left:274px;top:82px;width:102px;height:1px;background:rgba(198,160,246,.3)"></div>
<svg class="abs" style="left:284px;top:51px" width="20" height="20" viewBox="0 0 20 20"><g fill="none" stroke-width="1.05"><path stroke="#8aadf4" d="M11 7.5 H4.5 a1 1 0 0 0 -1 1 V11.3 a1 1 0 0 0 1 1 H6.5 V11.3 a1 1 0 0 1 1 -1 H10 M7.5 7.5 V4.5 a1 1 0 0 1 1 -1 H12.3 a1 1 0 0 1 1 1 V7"/><path stroke="#eed49f" d="M9 12.5 H15.5 a1 1 0 0 0 1 -1 V8.7 a1 1 0 0 0 -1 -1 H13.5 V8.7 a1 1 0 0 1 -1 1 H10 M12.5 12.5 V15.5 a1 1 0 0 1 -1 1 H7.7 a1 1 0 0 1 -1 -1 V13"/></g><circle cx="9.5" cy="5.5" r="0.7" fill="#8aadf4"/><circle cx="10.5" cy="14.5" r="0.7" fill="#eed49f"/></svg>
<div class="t" style="left:307px;top:53px;font-size:13.3px;letter-spacing:0.15px;color:#b3a7f4">jeu.py</div>
<svg class="abs" style="left:355px;top:56px" width="10" height="10" viewBox="0 0 10 10"><path d="M1.2 1.2 L8.8 8.8 M8.8 1.2 L1.2 8.8" stroke="#70758e" stroke-width="1.05"/></svg>
<svg class="abs" style="left:1856px;top:53px" width="8" height="16" viewBox="0 0 8 16"><g fill="#c9cff0"><circle cx="4" cy="3.3" r="1.15"/><circle cx="4" cy="8" r="1.15"/><circle cx="4" cy="12.7" r="1.15"/></g></svg>
<!-- inspection widget -->
<svg class="abs" style="left:1799px;top:89px" width="14" height="14" viewBox="0 0 14 14"><g fill="none" stroke="#5eb35e" stroke-width="1.4" stroke-linecap="round"><path d="M1.5 5.5 L4.8 8.8 L12 1.5"/></g><path d="M1.2 12.5 l1.4 -1.3 l1.4 1.3 l1.4 -1.3 l1.4 1.3 l1.4 -1.3 l1.4 1.3 l1.4 -1.3" fill="none" stroke="#5eb35e" stroke-width="0.9"/></svg>
<div class="t" style="left:1815px;top:88px;font-size:13px;color:#cad3f5">38</div>
<svg class="abs" style="left:1842px;top:92px" width="10" height="7" viewBox="0 0 10 7"><path d="M1 5.5 L5 1.5 L9 5.5" fill="none" stroke="#c3c7d6" stroke-width="1.15"/></svg>
<svg class="abs" style="left:1865px;top:92px" width="10" height="7" viewBox="0 0 10 7"><path d="M1 1.5 L5 5.5 L9 1.5" fill="none" stroke="#c3c7d6" stroke-width="1.15"/></svg>
<div class="abs" style="left:1870px;top:111px;width:8px;height:486px;background:rgba(255,255,255,.168)"></div>
<!-- run gutter icon line 6 -->
<svg class="abs" style="left:302px;top:195px" width="16" height="16" viewBox="0 0 16 16"><path d="M2.8 1.9 V13.9 a0.5 0.5 0 0 0 0.8 0.4 L13.6 8.4 a0.5 0.5 0 0 0 0 -0.8 L3.6 1.5 a0.5 0.5 0 0 0 -0.8 0.4 z" fill="#263a2b" stroke="#5aa25c" stroke-width="1.15" stroke-linejoin="round"/></svg>
<!-- right strip -->
<svg class="abs" style="left:1890px;top:49px" width="22" height="22" viewBox="0 0 22 22"><g fill="none" stroke="#dcdde4" stroke-width="1.2" stroke-linejoin="round" stroke-linecap="round"><path d="M2.3 17.6 H17.9 L16.2 14.6 V10.6 C16.2 6.6 13.5 3.4 10.1 3.4 C6.7 3.4 4 6.6 4 10.6 V14.6 Z"/><path d="M8.4 19.9 Q10.1 21.2 11.8 19.9"/></g><circle cx="16.6" cy="5.4" r="3.6" fill="#548af7"/></svg>
<svg class="abs" style="left:1887px;top:89px" width="26" height="24" viewBox="0 0 26 24"><g fill="none" stroke="#d0d1d9" stroke-width="1.35" stroke-linecap="round">
  <path d="M6.2 5.3 C12 3.6 20.5 5.3 20.5 10.8 C20.5 15.2 15 16.6 11.6 15.3 C9 14.3 9.2 11.4 11.5 11.1 C12.6 11 13.4 11.7 13.7 12.3"/>
  <path d="M19.6 18.5 C13.5 20.4 5.3 19 5.3 13.3 C5.3 9.4 9.6 8.2 12.4 8.5 C15 8.8 16.6 10.1 16.6 11.6"/></g></svg>
<svg class="abs" style="left:1891px;top:131px" width="18" height="20" viewBox="0 0 18 20"><g fill="none" stroke="#cdced6" stroke-width="1.2"><ellipse cx="9" cy="3.4" rx="7.4" ry="2.6"/><path d="M1.6 3.4 V16 a7.4 2.6 0 0 0 14.8 0 V3.4 M1.6 7.6 a7.4 2.6 0 0 0 14.8 0 M1.6 11.8 a7.4 2.6 0 0 0 14.8 0"/></g></svg>
<!-- status bar -->
<div class="abs" style="left:14px;top:1059px;width:8px;height:8px;border:1.2px solid #548af7;border-radius:2px;background:#2c3a63"></div>
<div class="t" style="left:26px;top:1056px;font-size:13.3px;letter-spacing:0.15px;color:#cad3f5">MonopN’SI</div>
<svg class="abs" style="left:102px;top:1058px" width="7" height="11" viewBox="0 0 7 11"><path d="M1 1 L5.5 5.5 L1 10" fill="none" stroke="#9da3bd" stroke-width="1.1"/></svg>
<svg class="abs" style="left:116px;top:1052px" width="20" height="20" viewBox="0 0 20 20"><g fill="none" stroke-width="1.05"><path stroke="#8aadf4" d="M11 7.5 H4.5 a1 1 0 0 0 -1 1 V11.3 a1 1 0 0 0 1 1 H6.5 V11.3 a1 1 0 0 1 1 -1 H10 M7.5 7.5 V4.5 a1 1 0 0 1 1 -1 H12.3 a1 1 0 0 1 1 1 V7"/><path stroke="#eed49f" d="M9 12.5 H15.5 a1 1 0 0 0 1 -1 V8.7 a1 1 0 0 0 -1 -1 H13.5 V8.7 a1 1 0 0 1 -1 1 H10 M12.5 12.5 V15.5 a1 1 0 0 1 -1 1 H7.7 a1 1 0 0 1 -1 -1 V13"/></g><circle cx="9.5" cy="5.5" r="0.7" fill="#8aadf4"/><circle cx="10.5" cy="14.5" r="0.7" fill="#eed49f"/></svg>
<div class="t" style="left:138px;top:1056px;font-size:13.3px;letter-spacing:0.15px;color:#cad3f5">jeu.py</div>
<div class="t" style="left:1572px;top:1056px;font-size:13.3px;letter-spacing:0.15px;color:#cad3f5">11:20</div>
<div class="t" style="left:1618px;top:1056px;font-size:13.3px;letter-spacing:0.15px;color:#cad3f5">CRLF</div>
<div class="t" style="left:1666px;top:1056px;font-size:13.3px;letter-spacing:0.15px;color:#cad3f5">UTF-8</div>
<div class="t" style="left:1726px;top:1056px;font-size:13.3px;letter-spacing:0.15px;color:#cad3f5">4 spaces</div>
<div class="t" style="left:1798px;top:1056px;font-size:13.3px;letter-spacing:0.15px;color:#cad3f5">Python 3.12</div>
<svg class="abs" style="left:1888px;top:1056px" width="16" height="16" viewBox="0 0 16 16"><g fill="none" stroke="#cdced6" stroke-width="1.2"><rect x="1.5" y="6.8" width="10" height="7.5" rx="1.2"/><path d="M8 6.8 V4.5 a3 3 0 0 1 6 0 V6"/></g><rect x="5.8" y="9.8" width="1.6" height="1.6" fill="#cdced6"/></svg>
<svg width="0" height="0" style="position:absolute"><defs><pattern id="zz" width="4" height="3" patternUnits="userSpaceOnUse"><g fill="#8cc084"><rect x="0" y="2" width="1" height="1"/><rect x="1" y="1" width="1" height="1"/><rect x="2" y="0" width="1" height="1"/><rect x="3" y="1" width="1" height="1"/></g></pattern></defs></svg>
<svg class="abs" style="left:730px;top:232px" width="40" height="3"><rect width="40" height="3" fill="url(#zz)"/></svg>
<svg class="abs" style="left:474px;top:364px" width="56" height="3"><rect width="56" height="3" fill="url(#zz)"/></svg>
<svg class="abs" style="left:514px;top:452px" width="64" height="3"><rect width="64" height="3" fill="url(#zz)"/></svg>
<svg class="abs" style="left:690px;top:452px" width="48" height="3"><rect width="48" height="3" fill="url(#zz)"/></svg>
<svg class="abs" style="left:418px;top:474px" width="56" height="3"><rect width="56" height="3" fill="url(#zz)"/></svg>
<svg class="abs" style="left:562px;top:474px" width="48" height="3"><rect width="48" height="3" fill="url(#zz)"/></svg>
<svg class="abs" style="left:418px;top:496px" width="56" height="3"><rect width="56" height="3" fill="url(#zz)"/></svg>
<svg class="abs" style="left:642px;top:518px" width="32" height="3"><rect width="32" height="3" fill="url(#zz)"/></svg>
<svg class="abs" style="left:770px;top:518px" width="64" height="3"><rect width="64" height="3" fill="url(#zz)"/></svg>
<svg class="abs" style="left:746px;top:606px" width="48" height="3"><rect width="48" height="3" fill="url(#zz)"/></svg>
<svg class="abs" style="left:690px;top:694px" width="40" height="3"><rect width="40" height="3" fill="url(#zz)"/></svg>
<svg class="abs" style="left:754px;top:694px" width="56" height="3"><rect width="56" height="3" fill="url(#zz)"/></svg>
<svg class="abs" style="left:970px;top:694px" width="48" height="3"><rect width="48" height="3" fill="url(#zz)"/></svg>
<svg class="abs" style="left:826px;top:760px" width="64" height="3"><rect width="64" height="3" fill="url(#zz)"/></svg>
<svg class="abs" style="left:898px;top:760px" width="72" height="3"><rect width="72" height="3" fill="url(#zz)"/></svg>
<svg class="abs" style="left:418px;top:826px" width="56" height="3"><rect width="56" height="3" fill="url(#zz)"/></svg>
<svg class="abs" style="left:578px;top:826px" width="56" height="3"><rect width="56" height="3" fill="url(#zz)"/></svg>
<svg class="abs" style="left:522px;top:848px" width="48" height="3"><rect width="48" height="3" fill="url(#zz)"/></svg>
<svg class="abs" style="left:778px;top:848px" width="48" height="3"><rect width="48" height="3" fill="url(#zz)"/></svg>
<svg class="abs" style="left:658px;top:914px" width="48" height="3"><rect width="48" height="3" fill="url(#zz)"/></svg>
<svg class="abs" style="left:450px;top:980px" width="48" height="3"><rect width="48" height="3" fill="url(#zz)"/></svg>
<svg class="abs" style="left:506px;top:980px" width="72" height="3"><rect width="72" height="3" fill="url(#zz)"/></svg>
<svg class="abs" style="left:666px;top:980px" width="48" height="3"><rect width="48" height="3" fill="url(#zz)"/></svg>
<svg class="abs" style="left:1082px;top:980px" width="56" height="3"><rect width="56" height="3" fill="url(#zz)"/></svg>
<svg class="abs" style="left:626px;top:1002px" width="32" height="3"><rect width="32" height="3" fill="url(#zz)"/></svg>
<svg class="abs" style="left:698px;top:1002px" width="48" height="3"><rect width="48" height="3" fill="url(#zz)"/></svg>
<svg class="abs" style="left:754px;top:1002px" width="56" height="3"><rect width="56" height="3" fill="url(#zz)"/></svg>
</body></html>
